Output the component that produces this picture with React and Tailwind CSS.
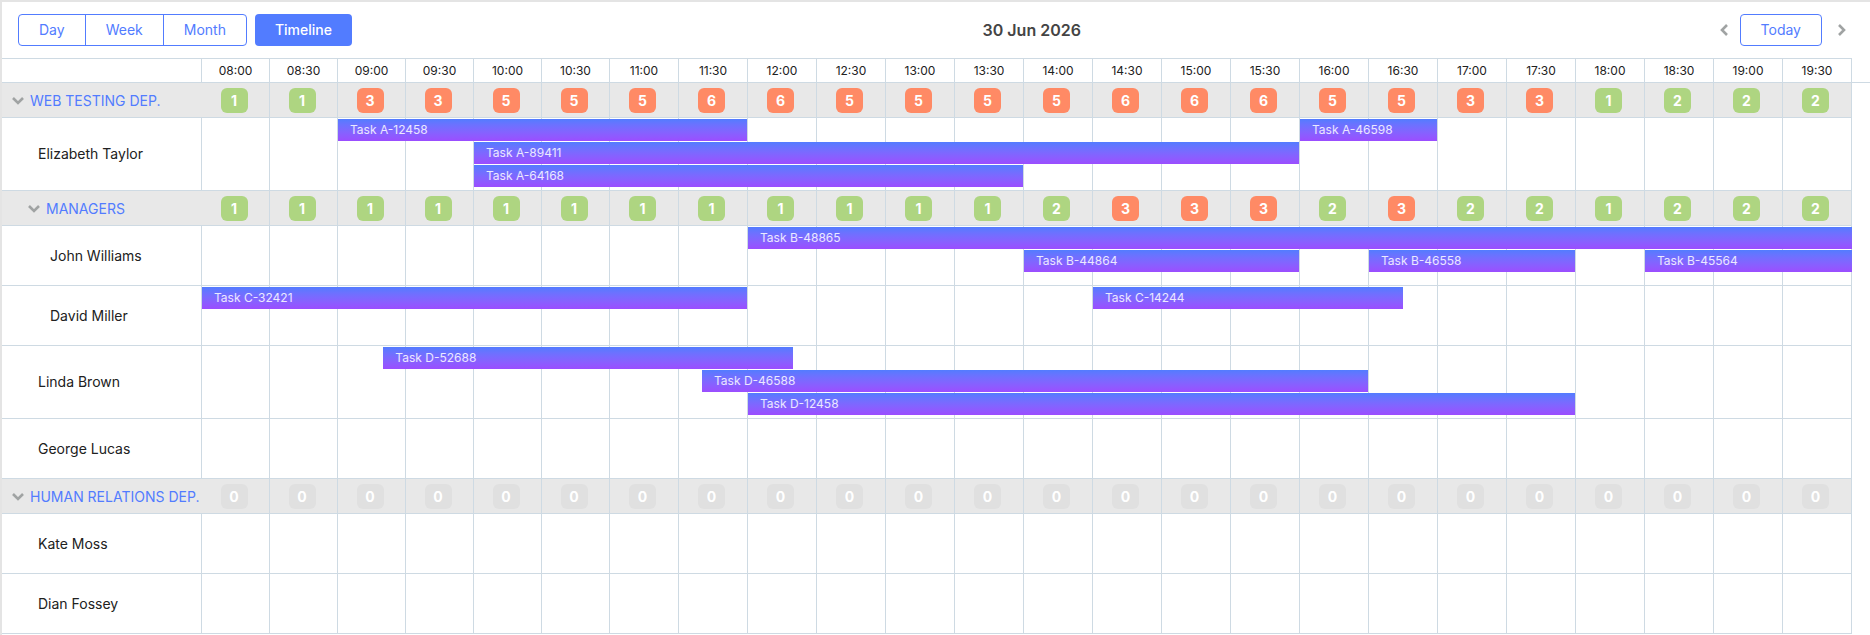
import React from "react";
import clsx from "clsx";

const VIEWS = ["Day", "Week", "Month"];

const SLOTS = Array.from({ length: 24 }, (_, i) => {
  const hour = String(8 + Math.floor(i / 2)).padStart(2, "0");
  return `${hour}:${i % 2 ? "30" : "00"}`;
});

// Every half hour slot is split in six tracks of five minutes
const toTrack = (time) => {
  const [hours, minutes] = time.split(":").map(Number);
  return ((hours - 8) * 60 + minutes) / 5 + 1;
};

const ROWS = [
  {
    type: "group",
    name: "WEB TESTING DEP.",
    counts: [1, 1, 3, 3, 5, 5, 5, 6, 6, 5, 5, 5, 5, 6, 6, 6, 5, 5, 3, 3, 1, 2, 2, 2],
  },
  {
    name: "Elizabeth Taylor",
    tasks: [
      { title: "Task A-12458", start: "09:00", end: "12:00", lane: 1 },
      { title: "Task A-89411", start: "10:00", end: "16:00", lane: 2 },
      { title: "Task A-64168", start: "10:00", end: "14:00", lane: 3 },
      { title: "Task A-46598", start: "16:00", end: "17:00", lane: 1 },
    ],
  },
  {
    type: "group",
    name: "MANAGERS",
    nested: true,
    counts: [1, 1, 1, 1, 1, 1, 1, 1, 1, 1, 1, 1, 2, 3, 3, 3, 2, 3, 2, 2, 1, 2, 2, 2],
  },
  {
    name: "John Williams",
    nested: true,
    tasks: [
      { title: "Task B-48865", start: "12:00", end: "20:00", lane: 1 },
      { title: "Task B-44864", start: "14:00", end: "16:00", lane: 2 },
      { title: "Task B-46558", start: "16:30", end: "18:00", lane: 2 },
      { title: "Task B-45564", start: "18:30", end: "20:00", lane: 2 },
    ],
  },
  {
    name: "David Miller",
    nested: true,
    tasks: [
      { title: "Task C-32421", start: "08:00", end: "12:00", lane: 1 },
      { title: "Task C-14244", start: "14:30", end: "16:45", lane: 1 },
    ],
  },
  {
    name: "Linda Brown",
    tasks: [
      { title: "Task D-52688", start: "09:20", end: "12:20", lane: 1 },
      { title: "Task D-46588", start: "11:40", end: "16:30", lane: 2 },
      { title: "Task D-12458", start: "12:00", end: "18:00", lane: 3 },
    ],
  },
  { name: "George Lucas", tasks: [] },
  {
    type: "group",
    name: "HUMAN RELATIONS DEP.",
    counts: Array(24).fill(0),
  },
  { name: "Kate Moss", tasks: [] },
  { name: "Dian Fossey", tasks: [] },
];

const SLOT_GRID =
  "grid grid-cols-[repeat(6,minmax(0,68fr))_repeat(18,minmax(0,69fr))]";
const TRACK_GRID =
  "grid grid-cols-[repeat(36,minmax(0,68fr))_repeat(108,minmax(0,69fr))]";

function Chevron({ className, points, viewBox = "0 0 12 8" }) {
  return (
    <svg viewBox={viewBox} className={className} fill="none" aria-hidden="true">
      <polyline points={points} stroke="#a0a3a3" strokeWidth="2.6" />
    </svg>
  );
}

function Toolbar() {
  return (
    <header className="flex items-center justify-between px-4 pt-3 pb-3">
      <div className="flex gap-2">
        <div className="flex h-8 divide-x divide-[#527cff] rounded border border-[#527cff]">
          {VIEWS.map((view) => (
            <button key={view} type="button" className="px-5 text-sm text-[#527cff]">
              {view}
            </button>
          ))}
        </div>
        <button
          type="button"
          className="h-8 rounded bg-[#527cff] px-5 text-sm font-medium text-white"
        >
          Timeline
        </button>
      </div>

      <h1 className="text-base font-semibold text-[#444]">30 Jun 2026</h1>

      <div className="flex items-center">
        <button type="button" aria-label="Previous" className="mr-1 flex h-8 w-6 items-center justify-center">
          <Chevron className="h-3 w-2" viewBox="0 0 8 12" points="7,1 2,6 7,11" />
        </button>
        <button
          type="button"
          className="h-8 rounded border border-[#527cff] px-5 text-sm text-[#527cff]"
        >
          Today
        </button>
        <button type="button" aria-label="Next" className="ml-2 flex h-8 w-6 items-center justify-center">
          <Chevron className="h-3 w-2" viewBox="0 0 8 12" points="1,1 6,6 1,11" />
        </button>
      </div>
    </header>
  );
}

function CountBadge({ value }) {
  return (
    <span
      className={clsx(
        "flex h-[25px] w-[27px] items-center justify-center rounded-md pt-px text-sm font-bold text-white",
        value === 0 && "bg-[#e0e0e0]",
        value > 0 && value < 3 && "bg-[#aed581]",
        value >= 3 && "bg-[#ff8a65]"
      )}
    >
      {value}
    </span>
  );
}

function GroupRow({ row }) {
  return (
    <tr className="h-[35px] bg-[#e8e8e8]">
      <th scope="row" className="border-b border-[#cedae3] p-0 text-left font-normal">
        <button
          type="button"
          className={clsx(
            "flex items-center gap-1.5 pt-0.5 text-sm whitespace-nowrap text-[#527cff]",
            row.nested ? "pl-[26px]" : "pl-2.5"
          )}
        >
          <Chevron className="h-2 w-3" points="1,1 6,6 11,1" />
          {row.name}
        </button>
      </th>
      <td className="border-b border-[#cedae3] p-0">
        <div className={SLOT_GRID}>
          {row.counts.map((count, i) => (
            <div
              key={SLOTS[i]}
              className="flex h-[34px] items-center justify-center border-r border-[#cedae3] pt-px pr-[3px]"
            >
              <CountBadge value={count} />
            </div>
          ))}
        </div>
      </td>
      <td className="bg-white p-0" />
    </tr>
  );
}

function TaskBar({ task }) {
  return (
    <div
      className={clsx(
        "flex h-[22px] items-center bg-linear-to-b from-[#527cff] to-[#9b4dff] pl-3 text-xs whitespace-nowrap text-white/85",
        task.end !== "20:00" && "mr-px"
      )}
      style={{
        gridColumn: `${toTrack(task.start)} / ${toTrack(task.end)}`,
        gridRow: task.lane,
      }}
    >
      {task.title}
    </div>
  );
}

function ResourceRow({ row }) {
  return (
    <tr>
      <th
        scope="row"
        className={clsx(
          "border-r border-b border-[#cedae3] p-0 text-left text-sm font-normal text-[#212121]",
          row.nested ? "pl-12" : "pl-9"
        )}
      >
        {row.name}
      </th>
      <td className="border-b border-[#cedae3] p-0">
        <div className="grid min-h-[59px]">
          <div className={clsx(SLOT_GRID, "[grid-area:1/1]")}>
            {SLOTS.map((slot) => (
              <div key={slot} className="border-r border-[#cedae3]" />
            ))}
          </div>
          <div
            className={clsx(
              TRACK_GRID,
              "auto-rows-[22px] content-start gap-y-px pt-px pb-[3px] [grid-area:1/1]"
            )}
          >
            {row.tasks.map((task) => (
              <TaskBar key={task.title} task={task} />
            ))}
          </div>
        </div>
      </td>
      <td className="p-0" />
    </tr>
  );
}

export default function App() {
  return (
    <div className="min-h-screen border-t-2 border-l-2 border-[#e4e4e4] bg-white font-['Inter',sans-serif]">
      <Toolbar />

      <table className="w-full table-fixed border-separate border-spacing-0">
        <colgroup>
          <col className="w-[200px]" />
          <col />
          <col className="w-[18px]" />
        </colgroup>
        <thead>
          <tr>
            <th className="border-t border-r border-b border-[#cedae3] p-0" aria-label="Resource" />
            <th className="border-t border-b border-[#cedae3] p-0">
              <div className={SLOT_GRID}>
                {SLOTS.map((slot) => (
                  <div
                    key={slot}
                    className="border-r border-[#cedae3] text-center text-xs leading-[23px] font-normal text-[#212121]"
                  >
                    {slot}
                  </div>
                ))}
              </div>
            </th>
            <td className="border-b border-[#cedae3] p-0" />
          </tr>
        </thead>
        <tbody>
          {ROWS.map((row) =>
            row.type === "group" ? (
              <GroupRow key={row.name} row={row} />
            ) : (
              <ResourceRow key={row.name} row={row} />
            )
          )}
        </tbody>
      </table>
    </div>
  );
}
